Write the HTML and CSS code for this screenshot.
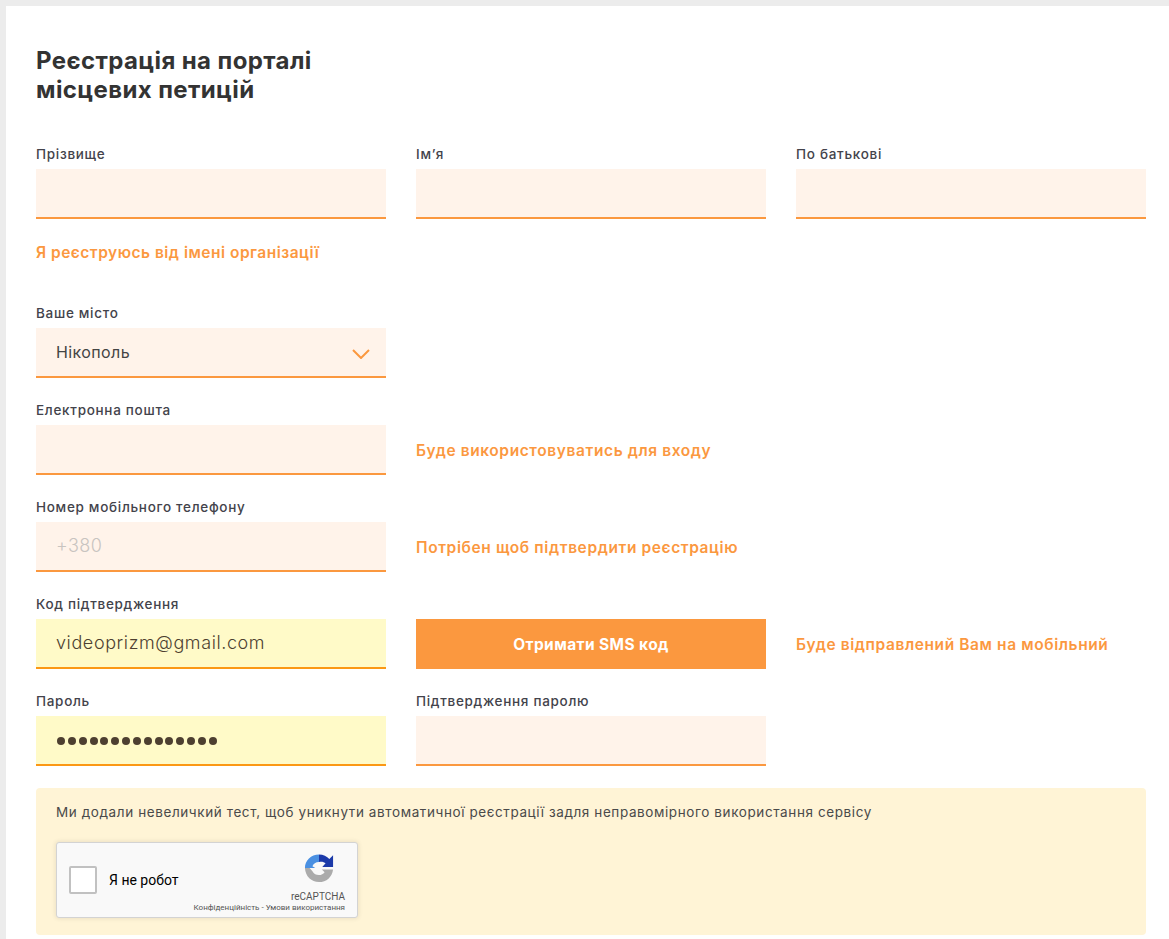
FILE: index.html
```html
<!DOCTYPE html>
<html lang="uk">
<head>
<meta charset="utf-8">
<title>Реєстрація на порталі місцевих петицій</title>
<link rel="stylesheet" href="styles.css">
</head>
<body>
<main class="card">
  <h1 class="title">Реєстрація на порталі<br>місцевих петицій</h1>

  <div class="row">
    <div class="field"><label class="label">Прізвище</label><div class="input"></div></div>
    <div class="field"><label class="label">Ім’я</label><div class="input"></div></div>
    <div class="field"><label class="label">По батькові</label><div class="input"></div></div>
  </div>

  <a class="org-link hint">Я реєструюсь від імені організації</a>

  <div class="row">
    <div class="field">
      <label class="label">Ваше місто</label>
      <div class="input select">
        <span>Нікополь</span>
        <svg class="chevron" width="18" height="10" viewBox="0 0 18 10"><path d="M1 1l8 8 8-8" fill="none" stroke="#fb983f" stroke-width="2"/></svg>
      </div>
    </div>
  </div>

  <div class="row">
    <div class="field"><label class="label">Електронна пошта</label><div class="input"></div></div>
    <div class="side hint">Буде використовуватись для входу</div>
  </div>

  <div class="row">
    <div class="field"><label class="label">Номер мобільного телефону</label><div class="input placeholder">+380</div></div>
    <div class="side hint wide">Потрібен щоб підтвердити реєстрацію</div>
  </div>

  <div class="row">
    <div class="field"><label class="label">Код підтвердження</label><div class="input autofill">videoprizm@gmail.com</div></div>
    <div class="side"><button class="btn" type="button">Отримати SMS код</button></div>
    <div class="side hint">Буде відправлений Вам на мобільний</div>
  </div>

  <div class="row row-last">
    <div class="field">
      <label class="label">Пароль</label>
      <div class="input autofill dots"><i></i><i></i><i></i><i></i><i></i><i></i><i></i><i></i><i></i><i></i><i></i><i></i><i></i><i></i><i></i></div>
    </div>
    <div class="field"><label class="label">Підтвердження паролю</label><div class="input"></div></div>
  </div>

  <section class="notice">
    <p class="notice-text">Ми додали невеличкий тест, щоб уникнути автоматичної реєстрації задля неправомірного використання сервісу</p>
    <div class="captcha">
      <span class="check"></span>
      <span class="robot">Я не робот</span>
      <div class="brand">
        <svg class="logo" width="30" height="30" viewBox="0 0 32 32">
          <path d="M1 16C1 8 7.500 1.500 16 1.500V9.500C12.500 9.500 10 11.500 9 14L12 16H1Z" fill="#4a90e2"/>
          <path d="M16 1.500C20.500 1.500 24.500 3.500 27 6.500L31 2.500V15H19.500L23 11C21.500 9.500 19 9 16 9.500Z" fill="#1c3aa9"/>
          <path d="M1 16H6L9 19.500C10.500 22.500 13 23.500 16 23.500C18.500 23.500 20.500 22.500 22 20.500L19 17.500H31C30 25.500 24 31 16 31C8 31 1.500 25 1 16Z" fill="#ababab"/>
        </svg>
        <span class="brand-name">reCAPTCHA</span>
        <span class="brand-links">Конфіденційність - Умови використання</span>
      </div>
    </div>
  </section>
</main>
</body>
</html>
```

FILE: styles.css
```css
* { box-sizing: border-box; }
html, body { height: 100%; margin: 0; overflow: hidden; }
body {
  background: #ececec;
  padding: 6px 0 0 6px;
  font-family: Inter, "Noto Sans", sans-serif;
  color: #3f3f46;
}
.card {
  background: #fff;
  min-height: 940px;
  padding: 40px 23px 0 30px;
}
.title {
  margin: 0 0 43px;
  font-size: 24px;
  line-height: 29px;
  font-weight: 700;
  color: #333;
  letter-spacing: 0.4px;
}
.row {
  display: grid;
  grid-template-columns: repeat(3, 350px);
  column-gap: 30px;
  margin-bottom: 25px;
}
.row-last { margin-bottom: 22px; }
.label {
  display: block;
  height: 22px;
  font-size: 13.500px;
  line-height: 15px;
  font-weight: 500;
  letter-spacing: 0.7px;
  color: #43434b;
}
.input {
  height: 50px;
  background: #fff3ea;
  border-bottom: 2px solid #fb983f;
  padding: 0 20px;
  font-size: 16px;
  font-weight: 400;
  letter-spacing: 0.4px;
  line-height: 48px;
  color: #444;
}
.select {
  display: flex;
  align-items: center;
  justify-content: space-between;
  padding-right: 16px;
}
.chevron { margin-top: 4px; }
.placeholder { color: #c8c4c0; font-weight: 300; font-size: 18px; }
.autofill {
  background: #fffac8;
  border-bottom-color: #fb9815;
  font-size: 18px;
  font-weight: 300;
  letter-spacing: 0.6px;
  color: #4d3f30;
}
.dots {
  display: flex;
  align-items: center;
  gap: 2.850px;
  padding-left: 21px;
  padding-top: 2px;
}
.dots i {
  width: 8px;
  height: 8px;
  border-radius: 50%;
  background: #4d3f30;
}
.hint {
  font-size: 15.500px;
  font-weight: 600;
  letter-spacing: 0.6px;
  color: #fb983f;
  white-space: nowrap;
}
.org-link {
  display: block;
  height: 20px;
  line-height: 20px;
  letter-spacing: 0.5px;
  margin: -1px 0 43px;
}
.side {
  padding-top: 23px;
  height: 72px;
  line-height: 50px;
}
.side:has(.btn) { padding-top: 22px; }
.btn {
  display: block;
  width: 100%;
  height: 50px;
  border: 0;
  background: #fb983f;
  color: #fff;
  font: 700 15.500px/50px Inter, sans-serif;
  letter-spacing: 0.4px;
}
.notice {
  width: 1110px;
  height: 147px;
  background: #fff4d6;
  border-radius: 4px;
  padding: 15px 20px 0;
}
.notice-text {
  margin: 0 0 21px;
  font-size: 13.500px;
  line-height: 18px;
  font-weight: 400;
  letter-spacing: 0.6px;
  color: #4a4a4a;
}
.captcha {
  position: relative;
  width: 302px;
  height: 76px;
  background: #f9f9f9;
  border: 1px solid #d3d3d3;
  border-radius: 3px;
  box-shadow: 0 0 4px 1px rgba(0,0,0,.08);
  display: flex;
  align-items: center;
  padding-left: 12px;
  font-family: Roboto, sans-serif;
}
.check {
  width: 28px;
  height: 28px;
  background: #fff;
  border: 2px solid #c1c1c1;
  border-radius: 2px;
}
.robot {
  margin-left: 12px;
  font-size: 14px;
  color: #000;
}
.brand {
  position: absolute;
  right: 12px;
  top: 10px;
  bottom: 4px;
  width: 160px;
  display: flex;
  flex-direction: column;
  align-items: flex-end;
}
.logo { margin-right: 11px; }
.brand-name {
  margin-top: 7px;
  font-size: 10px;
  line-height: 13px;
  color: #555;
}
.brand-links {
  margin-top: 0;
  font-size: 8px;
  line-height: 10px;
  color: #555;
  white-space: nowrap;
}
```
